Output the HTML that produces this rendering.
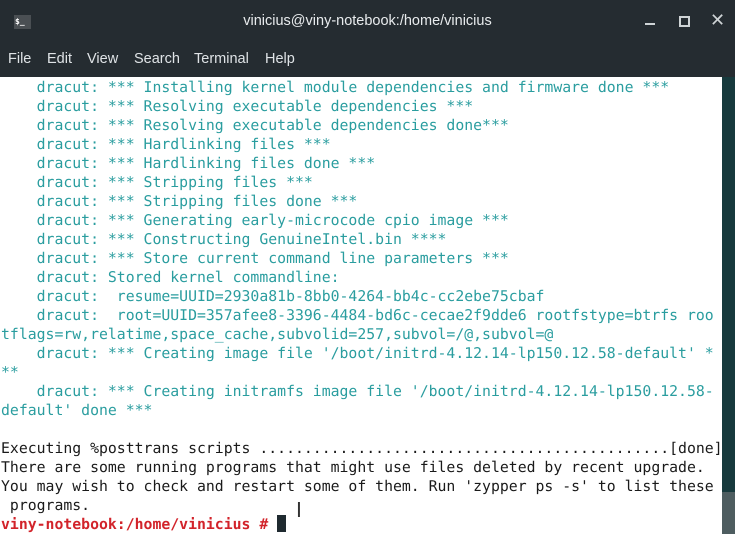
<html><head><style>
body{margin:0;width:735px;height:534px;overflow:hidden;background:#fff;font-family:"Liberation Sans",sans-serif}
#t{position:absolute;left:0;top:0;width:735px;height:38px;background:#252c31}
#m{position:absolute;left:0;top:38px;width:735px;height:39px;background:#252c31;color:#dfe3e6;font-size:14.5px}
#m span{position:absolute;top:13px}
#title{position:absolute;top:13px;left:0;width:735px;text-align:center;color:#e8ebed;font-size:14.5px}
#ic{position:absolute;left:14px;top:15px;width:16px;height:14px;background:#4a4f53;color:#fff;font:bold 8px "DejaVu Sans Mono",monospace;line-height:14px;padding-left:1px}
pre{position:absolute;left:1px;top:78px;margin:0;font:14.8px "DejaVu Sans Mono",monospace;line-height:19px;color:#1a1a1a;text-rendering:geometricPrecision}
.c{color:#2a9d9f}.r{color:#d2232a;font-weight:bold}
#sb{position:absolute;left:722px;top:77px;width:13px;height:457px;background:#173a3d}
#th{position:absolute;left:722px;top:492px;width:13px;height:42px;background:#4e5d60}
#cur{display:inline-block;width:9px;height:17px;background:#1f2a30;vertical-align:-3px}
</style></head><body>
<div id="t"><div id="ic">$_</div><div id="title">vinicius@viny-notebook:/home/vinicius</div>
<div style="position:absolute;left:645px;top:23px;width:10px;height:2px;background:#cfd4d6"></div>
<div style="position:absolute;left:679px;top:16px;width:7px;height:7px;border:2px solid #cfd4d6"></div>
<div style="position:absolute;left:710px;top:10px;color:#cfd4d6;font-size:18px;font-family:'DejaVu Sans'">✕</div></div>
<div id="m"><span style="left:8px">File</span><span style="left:47px">Edit</span><span style="left:87px">View</span><span style="left:134px">Search</span><span style="left:194px">Terminal</span><span style="left:265px">Help</span></div>
<div id="sb"></div><div id="th"></div>
<pre><span class="c">    dracut: *** Installing kernel module dependencies and firmware done ***
    dracut: *** Resolving executable dependencies ***
    dracut: *** Resolving executable dependencies done***
    dracut: *** Hardlinking files ***
    dracut: *** Hardlinking files done ***
    dracut: *** Stripping files ***
    dracut: *** Stripping files done ***
    dracut: *** Generating early-microcode cpio image ***
    dracut: *** Constructing GenuineIntel.bin ****
    dracut: *** Store current command line parameters ***
    dracut: Stored kernel commandline:
    dracut:  resume=UUID=2930a81b-8bb0-4264-bb4c-cc2ebe75cbaf
    dracut:  root=UUID=357afee8-3396-4484-bd6c-cecae2f9dde6 rootfstype=btrfs roo
tflags=rw,relatime,space_cache,subvolid=257,subvol=/@,subvol=@
    dracut: *** Creating image file '/boot/initrd-4.12.14-lp150.12.58-default' *
**
    dracut: *** Creating initramfs image file '/boot/initrd-4.12.14-lp150.12.58-
default' done ***</span>

Executing %posttrans scripts ..............................................[done]
There are some running programs that might use files deleted by recent upgrade.
You may wish to check and restart some of them. Run 'zypper ps -s' to list these
 programs.
<span class="r">viny-notebook:/home/vinicius #</span> <span id="cur"></span></pre>
<div style="position:absolute;left:296px;top:498px;font:20px 'DejaVu Sans';color:#333">I</div>
</body></html>
